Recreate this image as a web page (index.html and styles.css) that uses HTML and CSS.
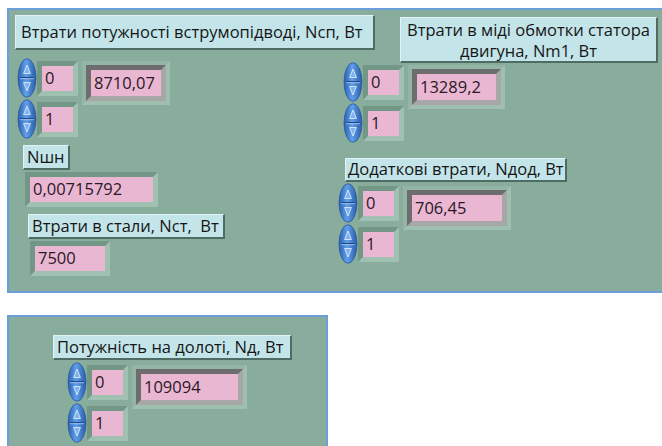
FILE: index.html
```html
<!DOCTYPE html>
<html lang="uk">
<head>
<meta charset="utf-8">
<title>Втрати потужності</title>
<link rel="stylesheet" href="styles.css">
</head>
<body>
<svg width="0" height="0" class="defs" aria-hidden="true">
  <defs>
    <linearGradient id="spinFill" x1="0" y1="0" x2="1" y2="0">
      <stop offset="0" stop-color="#2a60b2"/>
      <stop offset="0.45" stop-color="#639fe8"/>
      <stop offset="1" stop-color="#285ca9"/>
    </linearGradient>
    <symbol id="spin" viewBox="0 0 20 40">
      <ellipse cx="10" cy="20" rx="9" ry="19.3" fill="url(#spinFill)" stroke="#2a5aa0" stroke-width="0.8"/>
      <path d="M10 7 L6.6 15.5 L13.4 15.5 Z" fill="#7fb3ef" stroke="#d9e9fb" stroke-width="0.9" stroke-linejoin="round"/>
      <path d="M3 19.5 H17" stroke="#1d4a8a" stroke-width="1"/>
      <path d="M3 20.7 H17" stroke="#a9cbf3" stroke-width="0.8"/>
      <path d="M6.6 24.5 L13.4 24.5 L10 33 Z" fill="#7fb3ef" stroke="#d9e9fb" stroke-width="0.9" stroke-linejoin="round"/>
    </symbol>
  </defs>
</svg>

<section class="panel panel-top">
  <div class="col col-left">
    <div class="label label-ncp">Втрати потужності вструмопідводі, Nсп, Вт</div>

    <div class="arr arr-ncp">
      <div class="spins">
        <svg class="spin"><use href="#spin"/></svg>
        <svg class="spin"><use href="#spin"/></svg>
      </div>
      <div class="idx-col">
        <div class="frame"><div class="pink idx">0</div></div>
        <div class="frame"><div class="pink idx">1</div></div>
      </div>
      <div class="val"><div class="well"><div class="pink w70">8710,07</div></div></div>
    </div>

    <div class="label label-nshn">Nшн</div>
    <div class="frame ind-nshn"><div class="pink w123">0,00715792</div></div>

    <div class="label label-nst">Втрати в стали, Nст,&nbsp; Вт</div>
    <div class="frame ind-nst"><div class="pink w70">7500</div></div>
  </div>

  <div class="col col-right">
    <div class="label label-nm1">Втрати в міді обмотки статора<br>двигуна, Nm1, Вт</div>

    <div class="arr arr-nm1">
      <div class="spins">
        <svg class="spin"><use href="#spin"/></svg>
        <svg class="spin"><use href="#spin"/></svg>
      </div>
      <div class="idx-col">
        <div class="frame"><div class="pink idx">0</div></div>
        <div class="frame"><div class="pink idx">1</div></div>
      </div>
      <div class="val"><div class="well"><div class="pink w79">13289,2</div></div></div>
    </div>

    <div class="label label-ndod">Додаткові втрати, Nдод, Вт</div>

    <div class="arr arr-ndod">
      <div class="spins">
        <svg class="spin"><use href="#spin"/></svg>
        <svg class="spin"><use href="#spin"/></svg>
      </div>
      <div class="idx-col">
        <div class="frame"><div class="pink idx">0</div></div>
        <div class="frame"><div class="pink idx">1</div></div>
      </div>
      <div class="val"><div class="well"><div class="pink w90">706,45</div></div></div>
    </div>
  </div>
</section>

<section class="panel panel-bottom">
  <div class="col">
    <div class="label label-nd">Потужність на долоті, Nд, Вт</div>
    <div class="arr arr-nd">
      <div class="spins">
        <svg class="spin"><use href="#spin"/></svg>
        <svg class="spin"><use href="#spin"/></svg>
      </div>
      <div class="idx-col">
        <div class="frame"><div class="pink idx">0</div></div>
        <div class="frame"><div class="pink idx">1</div></div>
      </div>
      <div class="val"><div class="well"><div class="pink w97">109094</div></div></div>
    </div>
  </div>
</section>
</body>
</html>
```

FILE: styles.css
```css
* { box-sizing: border-box; }

html, body {
  margin: 0;
  padding: 0;
  background: #ffffff;
  overflow: hidden;
}

body {
  font-family: "Open Sans", "Noto Sans", sans-serif;
  font-size: 16.5px;
  color: #161616;
}

.defs { position: absolute; }

/* front panel areas */
.panel {
  background: #89ad9d;
  border: 2px solid #6b9fd9;
  margin-left: 7px;
}

.panel-top {
  margin-top: 8px;
  width: 700px;
  height: 285px;
  display: flex;
  align-items: flex-start;
}

.panel-bottom {
  margin-top: 22px;
  width: 321px;
  height: 160px;
}

.col {
  display: flex;
  flex-direction: column;
  align-items: flex-start;
}

.col-left { width: 329px; }

/* free labels */
.label {
  background: #c3e5e9;
  border: 1px solid;
  border-color: #e2f3f5 #4e6c64 #4e6c64 #e2f3f5;
  border-right-width: 2px;
  border-bottom-width: 2px;
  white-space: nowrap;
  display: flex;
  align-items: center;
  padding: 0 2px;
  line-height: 1;
}

.label-ncp  { margin: 5px 0 0 6px;  width: 360px; height: 35px; padding-left: 5px; }
.label-nshn { margin: 6px 0 0 14px; width: 47px;  height: 25px; padding-left: 3px; }
.label-nst  { margin: 7px 0 0 19px; width: 197px; height: 25px; padding-left: 3px; }
.label-nm1 {
  margin: 7px 0 0 62px;
  width: 258px;
  height: 46px;
  display: block;
  text-align: center;
  line-height: 21px;
  padding: 1px 0 0;
}
.label-ndod { margin: 15px 0 0 7px; width: 222px; height: 24px; padding-left: 2px; }
.label-nd   { margin: 18px 0 0 44px; width: 239px; height: 25px; padding-left: 3px; }

/* array controls */
.arr {
  display: flex;
  align-items: flex-start;
}

.arr-ncp  { margin: 8px 0 0 8px; }
.arr-nm1  { margin: -1px 0 0 5px; }
.arr-ndod { margin: 1px 0 0 0; }
.arr-nd   { margin: 2px 0 0 58px; }

.spins {
  display: flex;
  flex-direction: column;
  gap: 1px;
}

.spin {
  width: 20px;
  height: 40px;
  display: block;
}

.idx-col {
  display: flex;
  flex-direction: column;
  gap: 6px;
  margin-top: 3px;
}

/* raised frame around a numeric */
.frame {
  border: 5px solid;
  border-color: #739787 #a0c0b1 #a0c0b1 #739787;
}

.pink {
  background: #eab7d3;
  color: #2a1826;
  height: 25px;
  display: flex;
  align-items: center;
  padding-left: 3px;
  white-space: nowrap;
  line-height: 1;
}

.idx { width: 31px; }

/* element of the array: lighter band and sunken grey well */
.val {
  margin: 3px 0 0 4px;
  border: 4px solid;
  border-color: #93b5a5 #9fbfb0 #9fbfb0 #93b5a5;
}

.well {
  border: 5px solid;
  border-color: #6d6d6d #a7a7a7 #a7a7a7 #6d6d6d;
}

.well .pink { height: 26px; }

.w70  { width: 70px; }
.w79  { width: 79px; }
.w90  { width: 90px; }
.w97  { width: 97px; }
.w123 { width: 123px; }

.ind-nshn { margin: 2px 0 0 16px; }
.ind-nst  { margin: 2px 0 0 21px; }
```
